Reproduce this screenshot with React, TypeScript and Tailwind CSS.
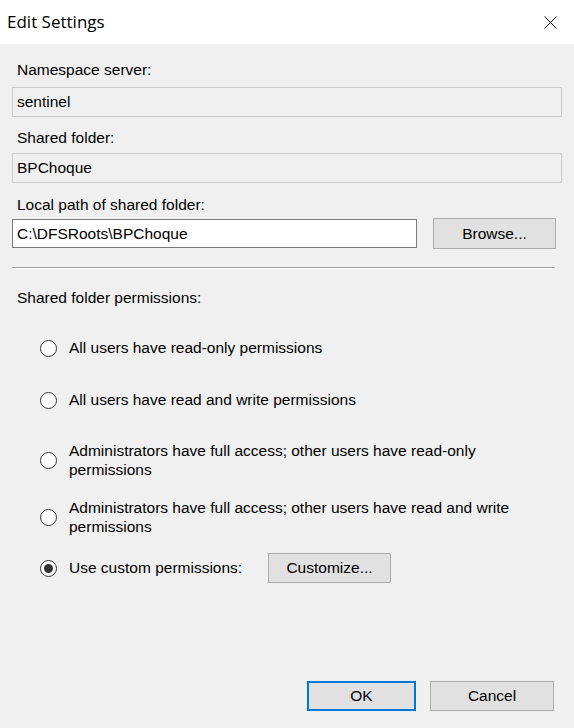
import React from "react";

const font = { fontFamily: '"Liberation Sans", Arial, sans-serif' };

function Radio({ checked }: { checked?: boolean }) {
  return (
    <span className="relative flex h-[17px] w-[17px] shrink-0 items-center justify-center rounded-full border border-[#333333] bg-white">
      {checked && <span className="h-[9px] w-[9px] rounded-full bg-[#333333]" />}
    </span>
  );
}

export default function App() {
  return (
    <div
      className="flex h-[728px] w-[574px] flex-col overflow-hidden bg-[#f0f0f0] text-[15.5px] text-black"
      style={font}
    >
      <div className="flex h-[44px] shrink-0 items-center justify-between bg-white pl-[7px] pr-[17px]">
        <span className="text-[17px] text-black" style={{ fontFamily: '"Open Sans", "Noto Sans", sans-serif' }}>
          Edit Settings
        </span>
        <svg width="13" height="13" viewBox="0 0 13 13" className="block">
          <path d="M0.5 0.5 L12.5 12.5 M12.5 0.5 L0.5 12.5" stroke="#000" strokeWidth="1" />
        </svg>
      </div>

      <div className="flex flex-1 flex-col px-[12px] pt-[17px] pb-[17px]">
        <div className="pl-[5px] leading-[18px]">Namespace server:</div>
        <div className="mt-[8px] flex h-[30px] items-center border border-[#cccccc] bg-[#f0f0f0] px-[4px] leading-[18px]">
          sentinel
        </div>

        <div className="mt-[12px] pl-[5px] leading-[18px]">Shared folder:</div>
        <div className="mt-[6px] flex h-[30px] items-center border border-[#cccccc] bg-[#f0f0f0] px-[4px] leading-[18px]">
          BPChoque
        </div>

        <div className="mt-[13px] pl-[5px] leading-[18px]">Local path of shared folder:</div>
        <div className="mt-[4px] flex items-center">
          <div className="flex h-[29px] w-[405px] items-center border border-[#7a7a7a] bg-white px-[4px] leading-[18px]">
            C:\DFSRoots\BPChoque
          </div>
          <button className="ml-[16px] flex h-[31px] w-[123px] items-center justify-center border border-[#adadad] bg-[#e1e1e1] leading-[18px]">
            Browse...
          </button>
        </div>

        <div className="mt-[18px] h-px w-[543px] bg-[#a0a0a0]" />
        <div className="h-px w-[543px] bg-white" />

        <div className="mt-[20px] pl-[5px] leading-[18px]">Shared folder permissions:</div>

        <div className="flex flex-col pl-[28px]">
          <div className="mt-[32px] flex items-center gap-[12px] leading-[18px]">
            <Radio />
            <span>All users have read-only permissions</span>
          </div>
          <div className="mt-[34px] flex items-center gap-[12px] leading-[18px]">
            <Radio />
            <span>All users have read and write permissions</span>
          </div>
          <div className="mt-[32px] flex items-center gap-[12px] leading-[19px]">
            <Radio />
            <span className="w-[440px]">
              Administrators have full access; other users have read-only permissions
            </span>
          </div>
          <div className="mt-[19px] flex items-center gap-[12px] leading-[19px]">
            <Radio />
            <span className="w-[460px]">
              Administrators have full access; other users have read and write permissions
            </span>
          </div>
          <div className="mt-[17px] flex items-center leading-[18px]">
            <Radio checked />
            <span className="ml-[12px] w-[199px]">Use custom permissions:</span>
            <button className="flex h-[30px] w-[123px] items-center justify-center border border-[#adadad] bg-[#e1e1e1]">
              Customize...
            </button>
          </div>
        </div>

        <div className="mt-auto flex justify-end gap-[14px] pr-[8px]">
          <button className="flex h-[30px] w-[109px] items-center justify-center border-2 border-[#0078d7] bg-[#e1e1e1]">
            OK
          </button>
          <button className="flex h-[30px] w-[124px] items-center justify-center border border-[#adadad] bg-[#e1e1e1]">
            Cancel
          </button>
        </div>
      </div>
    </div>
  );
}
